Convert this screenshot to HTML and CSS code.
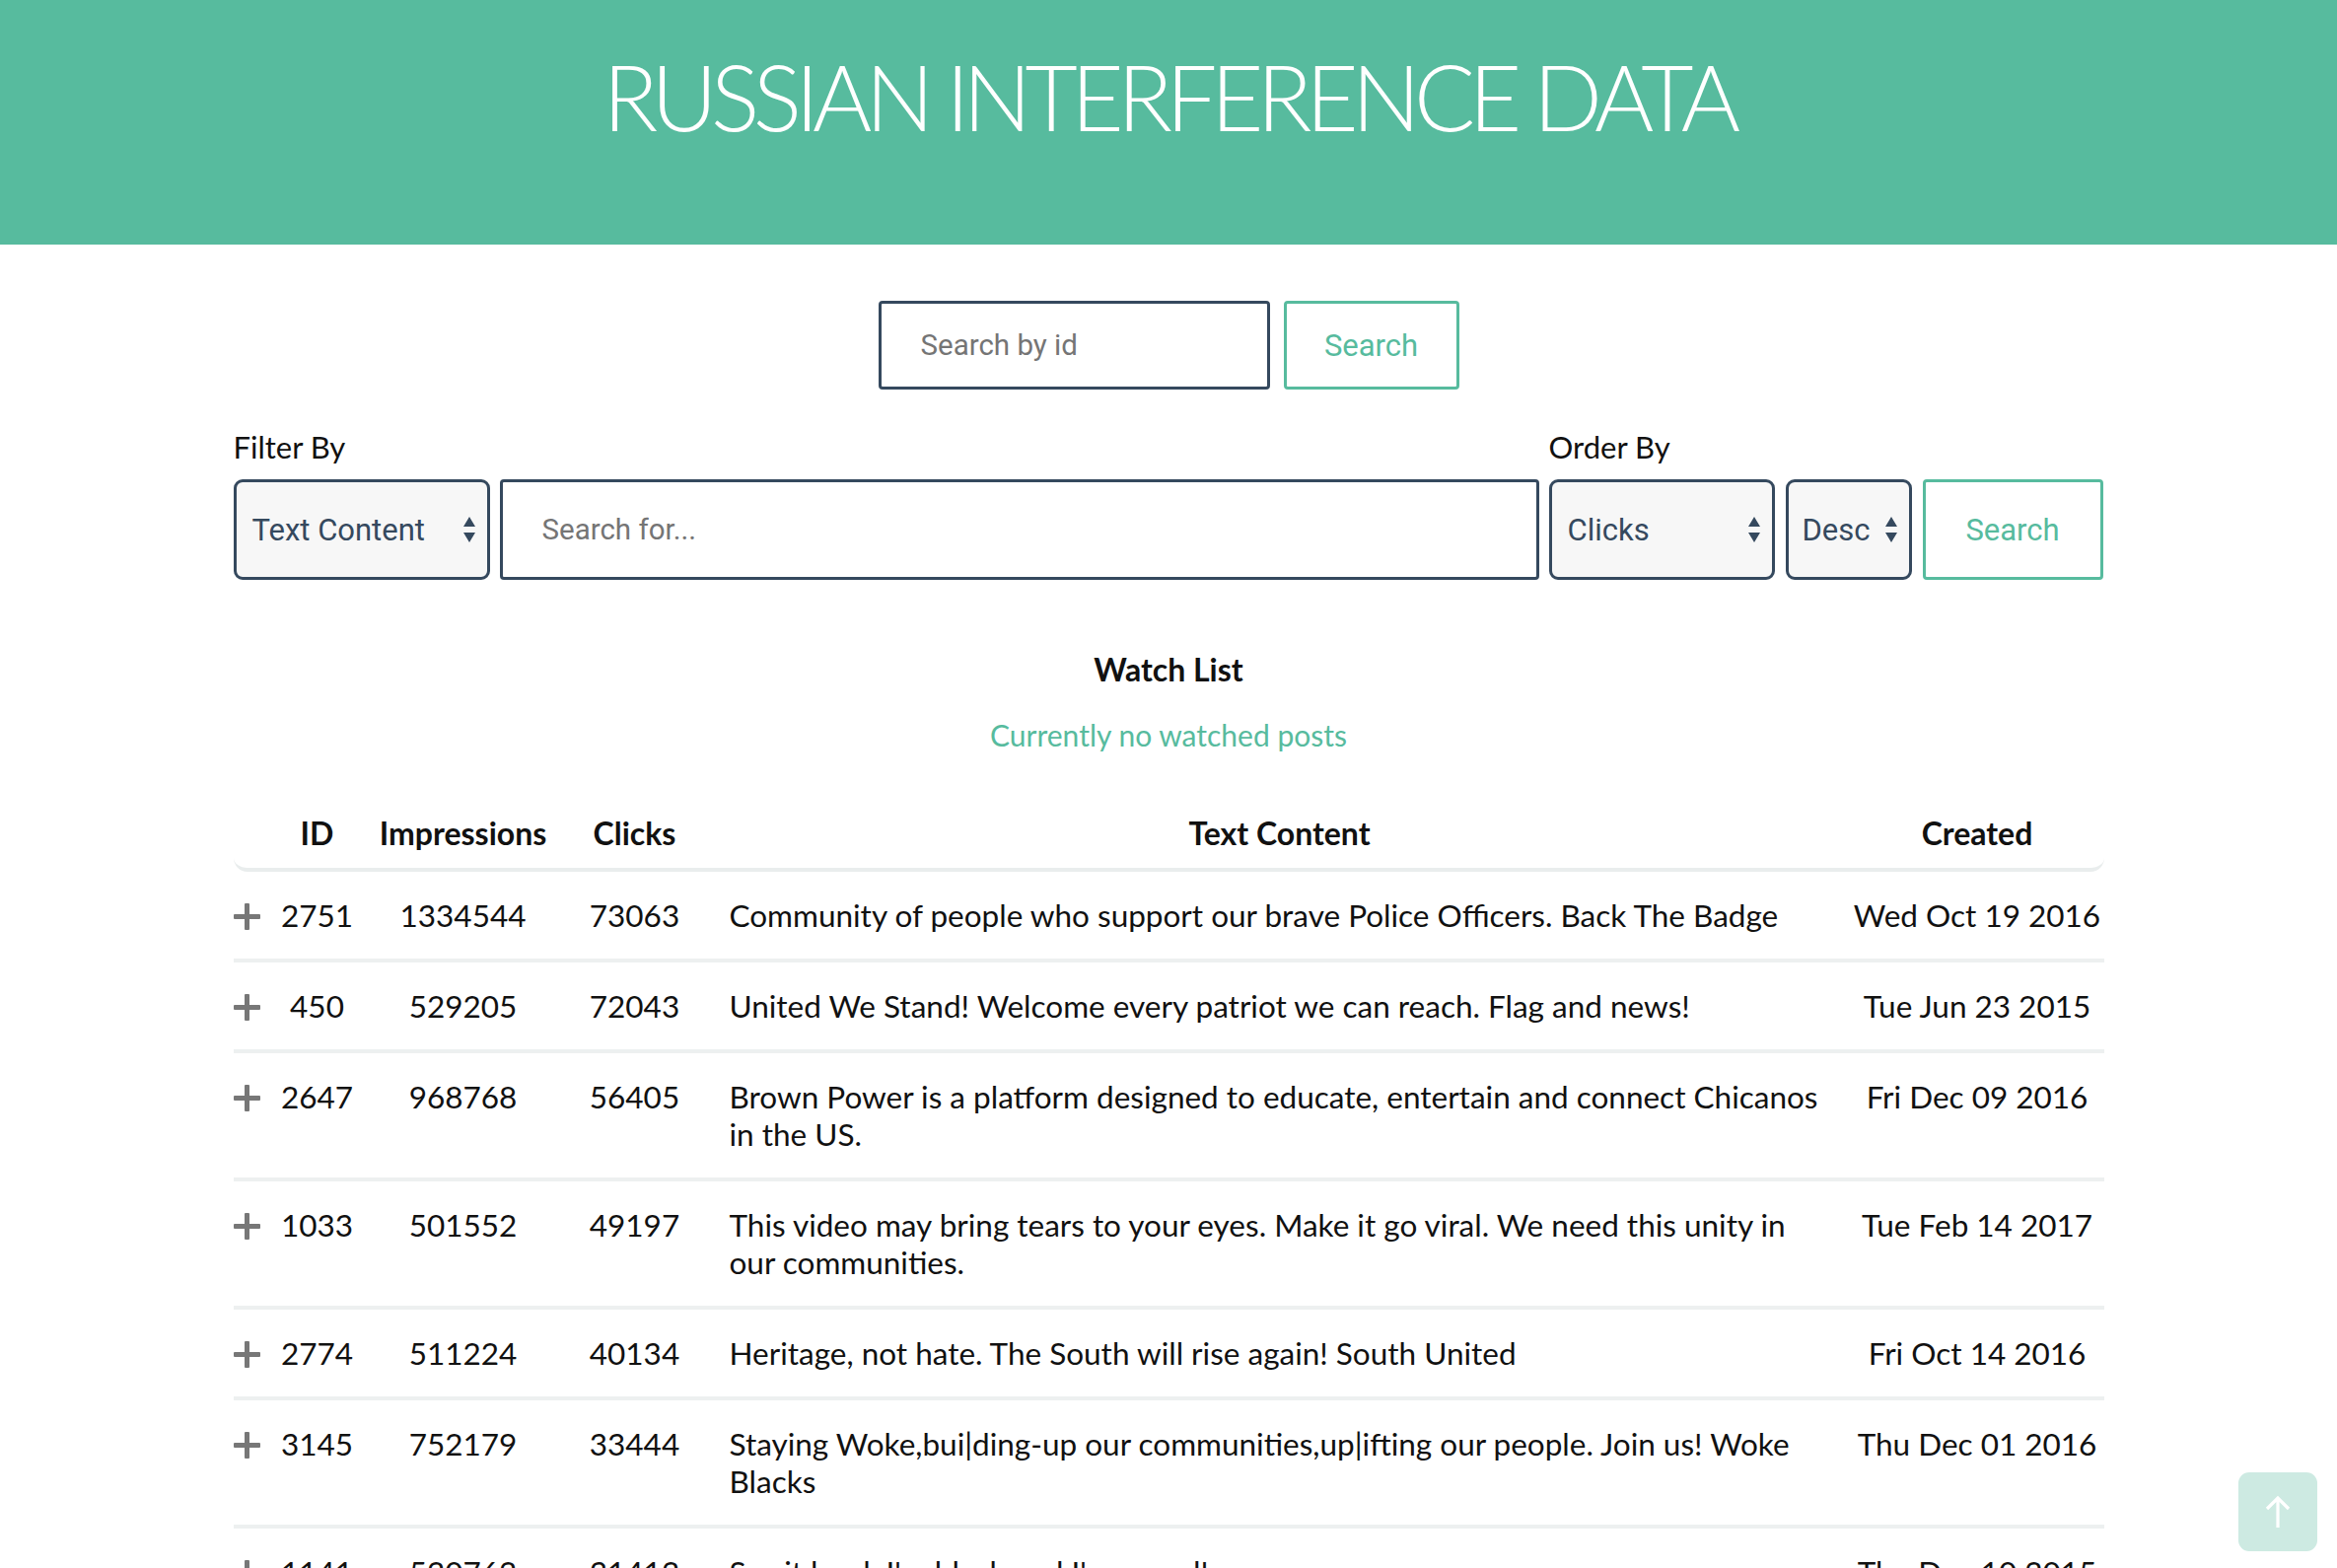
FILE: index.html
```html
<!DOCTYPE html>
<html lang="en">
<head>
<meta charset="utf-8">
<title>Russian Interference Data</title>
<link rel="stylesheet" href="styles.css">
</head>
<body>
<header class="hero">
  <h1 class="hero-title">RUSSIAN INTERFERENCE DATA</h1>
</header>
<main class="container">
  <form class="id-search">
    <input class="text-input id-input" type="text" placeholder="Search by id">
    <button class="btn-outline id-btn" type="button">Search</button>
  </form>

  <div class="filters">
    <div class="filter-group">
      <label class="field-label">Filter By</label>
      <div class="field-row">
        <div class="select select-filter"><span>Text Content</span>
          <svg class="arrows" viewBox="0 0 14 28" width="14" height="28"><path d="M7 1 L13 11 H1 Z M7 27 L13 17 H1 Z" fill="#35495e"/></svg>
        </div>
        <input class="text-input search-for" type="text" placeholder="Search for...">
      </div>
    </div>
    <div class="order-group">
      <label class="field-label">Order By</label>
      <div class="field-row">
        <div class="select select-clicks"><span>Clicks</span>
          <svg class="arrows" viewBox="0 0 14 28" width="14" height="28"><path d="M7 1 L13 11 H1 Z M7 27 L13 17 H1 Z" fill="#35495e"/></svg>
        </div>
        <div class="select select-desc"><span>Desc</span>
          <svg class="arrows" viewBox="0 0 14 28" width="14" height="28"><path d="M7 1 L13 11 H1 Z M7 27 L13 17 H1 Z" fill="#35495e"/></svg>
        </div>
        <button class="btn-outline order-btn" type="button">Search</button>
      </div>
    </div>
  </div>

  <section class="watch">
    <h2 class="watch-title">Watch List</h2>
    <p class="watch-empty">Currently no watched posts</p>
  </section>

  <table class="posts">
    <colgroup>
      <col class="c-plus"><col class="c-id"><col class="c-imp"><col class="c-clicks"><col class="c-text"><col class="c-created">
    </colgroup>
    <thead>
      <tr>
        <th class="th-first"></th>
        <th>ID</th>
        <th>Impressions</th>
        <th>Clicks</th>
        <th>Text Content</th>
        <th class="th-last">Created</th>
      </tr>
    </thead>
    <tbody>
      <tr>
        <td class="plus-cell"><span class="plus"></span></td>
        <td class="num">2751</td><td class="num">1334544</td><td class="num">73063</td>
        <td class="text">Community of people who support our brave Police Officers. Back The Badge</td>
        <td class="date">Wed Oct 19 2016</td>
      </tr>
      <tr>
        <td class="plus-cell"><span class="plus"></span></td>
        <td class="num">450</td><td class="num">529205</td><td class="num">72043</td>
        <td class="text">United We Stand! Welcome every patriot we can reach. Flag and news!</td>
        <td class="date">Tue Jun 23 2015</td>
      </tr>
      <tr>
        <td class="plus-cell"><span class="plus"></span></td>
        <td class="num">2647</td><td class="num">968768</td><td class="num">56405</td>
        <td class="text">Brown Power is a platform designed to educate, entertain and connect Chicanos in the US.</td>
        <td class="date">Fri Dec 09 2016</td>
      </tr>
      <tr>
        <td class="plus-cell"><span class="plus"></span></td>
        <td class="num">1033</td><td class="num">501552</td><td class="num">49197</td>
        <td class="text">This video may bring tears to your eyes. Make it go viral. We need this unity in our communities.</td>
        <td class="date">Tue Feb 14 2017</td>
      </tr>
      <tr>
        <td class="plus-cell"><span class="plus"></span></td>
        <td class="num">2774</td><td class="num">511224</td><td class="num">40134</td>
        <td class="text">Heritage, not hate. The South will rise again! South United</td>
        <td class="date">Fri Oct 14 2016</td>
      </tr>
      <tr>
        <td class="plus-cell"><span class="plus"></span></td>
        <td class="num">3145</td><td class="num">752179</td><td class="num">33444</td>
        <td class="text">Staying Woke,bui|ding-up our communities,up|ifting our people. Join us! Woke Blacks</td>
        <td class="date">Thu Dec 01 2016</td>
      </tr>
      <tr>
        <td class="plus-cell"><span class="plus"></span></td>
        <td class="num">1141</td><td class="num">520762</td><td class="num">31412</td>
        <td class="text">Say it loud: I'm black and I'm proud!</td>
        <td class="date">Thu Dec 10 2015</td>
      </tr>
    </tbody>
  </table>
</main>

<button class="to-top" type="button" aria-label="Back to top">
  <svg viewBox="0 0 26 34" width="26" height="34"><path d="M13 33 V3 M2 14 L13 3 L24 14" fill="none" stroke="#ffffff" stroke-width="3.2"/></svg>
</button>
</body>
</html>
```

FILE: styles.css
```css
* { box-sizing: border-box; }

html, body {
  margin: 0;
  padding: 0;
  background: #ffffff;
}

body {
  font-family: Lato, "Open Sans", sans-serif;
  color: #111111;
  overflow: hidden;
  height: 1590px;
}

.hero {
  background: #57bb9e;
  height: 248px;
  padding-top: 43px;
  text-align: center;
}

.hero-title {
  margin: 0;
  font-size: 92px;
  font-weight: 300;
  line-height: 1.2;
  letter-spacing: -6.5px;
  color: #ffffff;
}

.container {
  width: 1897px;
  margin: 0 auto;
  padding-top: 57px;
}

.id-search {
  display: flex;
  justify-content: center;
  gap: 14px;
  margin: 0;
}

.text-input {
  font-family: Roboto, "Liberation Sans", sans-serif;
  font-size: 29.5px;
  color: #35495e;
  background: #ffffff;
  border: 3px solid #35495e;
  border-radius: 4px;
  outline: none;
}

.text-input::placeholder {
  color: #757575;
}

.id-input {
  width: 397px;
  height: 90px;
  padding: 0 40px;
}

.btn-outline {
  font-family: Roboto, "Liberation Sans", sans-serif;
  font-size: 31px;
  color: #57bb9e;
  background: #ffffff;
  border: 3px solid #57bb9e;
  border-radius: 4px;
  cursor: pointer;
  padding: 0;
}

.id-btn {
  width: 178px;
  height: 90px;
}

.filters {
  display: grid;
  grid-template-columns: 1fr 563px;
  column-gap: 10px;
  margin-top: 39px;
}

.field-label {
  display: block;
  font-size: 31px;
  line-height: 38px;
  color: #111111;
  margin-bottom: 14px;
}

.field-row {
  display: flex;
  gap: 10px;
  height: 102px;
}

.select {
  display: flex;
  align-items: center;
  justify-content: space-between;
  height: 102px;
  background: #f7f7f7;
  border: 3px solid #35495e;
  border-radius: 9px;
  font-family: Roboto, "Liberation Sans", sans-serif;
  font-size: 31px;
  color: #35495e;
  padding: 0 11px 0 16px;
}

.select-filter { width: 260px; }
.select-clicks { width: 229px; padding-left: 16px; }
.select-desc { width: 128px; padding-left: 14px; }

.order-group .field-row { gap: 11px; }

.search-for {
  flex: 1;
  height: 102px;
  padding: 0 40px;
}

.order-btn {
  width: 183px;
  height: 102px;
}

.watch {
  text-align: center;
  margin-top: 72px;
}

.watch-title {
  margin: 0;
  font-size: 32px;
  font-weight: 700;
  line-height: 38px;
  color: #111111;
}

.watch-empty {
  margin: 28px 0 0;
  font-size: 30px;
  line-height: 38px;
  color: #57bb9e;
}

.posts {
  width: 1897px;
  margin-top: 47px;
  border-collapse: separate;
  border-spacing: 0;
  table-layout: fixed;
  font-size: 31.5px;
  line-height: 38px;
  color: #111111;
}

.c-plus { width: 36px; }
.c-id { width: 98px; }
.c-imp { width: 198px; }
.c-clicks { width: 150px; }
.c-text { width: 1158px; }
.c-created { width: 257px; }

.posts th {
  font-weight: 700;
  font-size: 32px;
  padding: 15px 0 16px;
  text-align: center;
  border-bottom: 4px solid #e9eded;
}

.posts th.th-first { border-bottom-left-radius: 14px; }
.posts th.th-last { border-bottom-right-radius: 14px; }

.posts td {
  vertical-align: top;
  padding: 25px 0;
  border-bottom: 4px solid #edf0f0;
}

.posts td.num,
.posts td.date {
  text-align: center;
}

.posts td.text {
  text-align: left;
  padding-left: 21px;
  padding-right: 21px;
}

.plus-cell {
  text-align: left;
}

.plus {
  display: inline-block;
  position: relative;
  width: 27px;
  height: 27px;
  vertical-align: -3px;
}

.plus::before,
.plus::after {
  content: "";
  position: absolute;
  background: #777777;
  border-radius: 1px;
}

.plus::before {
  left: 0;
  right: 0;
  top: 11px;
  height: 5px;
}

.plus::after {
  top: 0;
  bottom: 0;
  left: 11px;
  width: 5px;
}

.to-top {
  position: fixed;
  right: 20px;
  bottom: 17px;
  width: 80px;
  height: 80px;
  border: 0;
  border-radius: 11px;
  background: #cdeae2;
  display: flex;
  align-items: center;
  justify-content: center;
  padding: 0;
}
```
